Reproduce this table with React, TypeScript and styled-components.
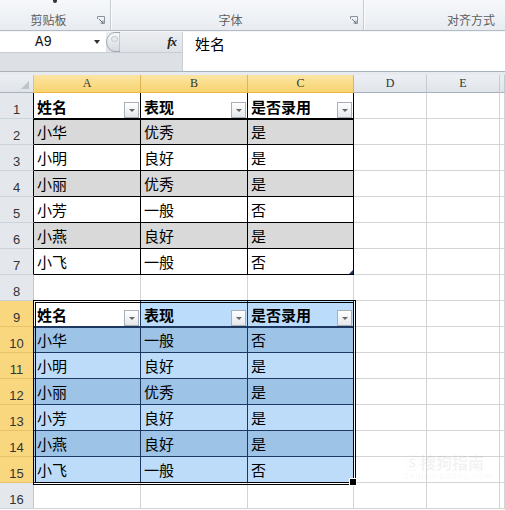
import React from 'react';
import styled, { createGlobalStyle } from 'styled-components';

const Global = createGlobalStyle`
  * { box-sizing: border-box; }
  html, body { margin: 0; padding: 0; background: #fff; overflow: hidden; }
  body { font-family: "Noto Sans CJK SC", sans-serif; }
`;

const NAVY = '#1c3760';
const GRID = '#d4d4d4';

const Page = styled.div`
  position: relative;
  width: 505px;
  height: 510px;
  display: flex;
  flex-direction: column;
  overflow: hidden;
  background: #fff;
`;

const Ribbon = styled.div`
  height: 31px;
  flex: none;
  display: flex;
  background: linear-gradient(#f6f8fa, #e8ecf1);
  border-bottom: 1px solid #b3bcc6;
`;

const Group = styled.div<{ $w: number }>`
  position: relative;
  width: ${p => p.$w}px;
  flex: none;
  display: flex;
  align-items: flex-end;
  padding-bottom: 3px;
  border-right: 1px solid #c5ccd4;
  box-shadow: 1px 0 0 #fafbfc;
`;

const GroupLabel = styled.div`
  flex: 1;
  text-align: center;
  font: 12px/14px "Noto Sans CJK SC", sans-serif;
  color: #5e5e5e;
`;

const Stub = styled.span`
  position: absolute;
  left: 53px;
  top: 0;
  width: 4px;
  height: 3px;
  border-radius: 0 0 2px 2px;
  background: #333;
`;

const Launcher = styled.svg`
  flex: none;
  width: 8px;
  height: 8px;
  margin: 0 5px 3px 0;
`;

const FormulaBar = styled.div`
  height: 41px;
  flex: none;
  display: flex;
  border-top: 1px solid #f3f5f7;
  border-bottom: 1px solid #aab2bc;
`;

const NamePanel = styled.div`
  width: 183px;
  flex: none;
  display: flex;
  flex-direction: column;
  background: #dde1e6;
  border-right: 1px solid #c9cfd6;
`;

const NameRow = styled.div`
  height: 21px;
  display: flex;
  align-items: center;
  background: linear-gradient(#eceef1, #dfe2e6);
  border-bottom: 1px solid #c6ccd3;
`;

const NameBox = styled.div`
  width: 106px;
  height: 20px;
  flex: none;
  display: flex;
  align-items: center;
  padding-left: 35px;
  background: #fff;
  font: 14px/20px "Liberation Mono", monospace;
  color: #111;
`;

const Caret = styled.span`
  margin-left: auto;
  margin-right: 6px;
  border-left: 3px solid transparent;
  border-right: 3px solid transparent;
  border-top: 4px solid #333;
`;

const Grip = styled.svg`
  flex: none;
  width: 14px;
  height: 20px;
`;

const Fx = styled.span`
  margin-left: auto;
  margin-right: 6px;
  font: italic 700 13px/20px "Liberation Serif", serif;
  color: #222;
  letter-spacing: -1px;
`;

const FormulaInput = styled.div`
  flex: 1;
  background: #fff;
  padding-left: 12px;
  font: 15px/24px "Noto Sans CJK SC", sans-serif;
  color: #000;
`;

const Gap = styled.div`
  height: 3px;
  flex: none;
  background: #e7eaee;
`;

const Sheet = styled.div`
  position: relative;
  display: grid;
  grid-template-columns: 34px 107px 107px 106px 73px 73px 1fr;
  grid-template-rows: 18px repeat(16, 26px);
`;

type Pos = { $r: number; $c: number };

const Corner = styled.div`
  grid-area: 1 / 1;
  position: relative;
  background: linear-gradient(#eceff3, #dfe3e8);
  border-right: 1px solid #bcc4cd;
  border-bottom: 1px solid #aab3bd;
  &::after {
    content: '';
    position: absolute;
    right: 4px;
    bottom: 3px;
    width: 8px;
    height: 8px;
    background: #bcc4cc;
    clip-path: polygon(100% 0, 100% 100%, 0 100%);
  }
`;

const ColHead = styled.div<{ $active?: boolean; $c: number }>`
  grid-area: 1 / ${p => p.$c};
  display: flex;
  align-items: center;
  justify-content: center;
  font: 12px/17px "Liberation Serif", serif;
  color: #333;
  background: ${p => (p.$active ? 'linear-gradient(#fbe5a4, #f8d470)' : 'linear-gradient(#eceff3, #e0e4e9)')};
  border-right: 1px solid ${p => (p.$active ? '#dcb45a' : '#c3cad3')};
  border-bottom: 1px solid ${p => (p.$active ? '#f0b840' : '#aab3bd')};
`;

const RowHead = styled.div<{ $active?: boolean; $edge?: string; $r: number }>`
  grid-area: ${p => p.$r} / 1;
  display: flex;
  justify-content: center;
  align-items: flex-start;
  padding-top: 7px;
  font: 13px/20px "Liberation Sans", sans-serif;
  color: #333;
  background: ${p => (p.$active ? '#f9d77e' : '#e4e8ed')};
  border-right: 1px solid ${p => p.$edge ?? (p.$active ? '#e0b55a' : '#bfc7d0')};
  border-bottom: 1px solid ${p => (p.$active ? '#e8c168' : '#cbd2da')};
`;

const Cell = styled.div<Pos & { $fill: string; $line: string; $head?: boolean; $top?: string; $corner?: boolean }>`
  grid-area: ${p => p.$r} / ${p => p.$c};
  position: relative;
  display: flex;
  align-items: center;
  padding: ${p => (p.$head ? '3px 0 0 3px' : '0 0 0 3px')};
  background: ${p => p.$fill};
  border-right: 1px solid ${p => p.$line};
  border-bottom: 1px solid ${p => p.$line};
  box-shadow: ${p => (p.$top ? `inset 0 1px 0 ${p.$top}` : 'none')};
  font: ${p => (p.$head ? 700 : 400)} 15px/22px "Noto Sans CJK SC", sans-serif;
  color: #000;
  white-space: nowrap;
  overflow: hidden;
  &::after {
    content: '';
    display: ${p => (p.$corner ? 'block' : 'none')};
    position: absolute;
    right: 0;
    bottom: 0;
    width: 4px;
    height: 4px;
    background: ${NAVY};
    clip-path: polygon(100% 0, 100% 100%, 0 100%);
  }
`;

const FilterBtn = styled.span`
  margin-left: auto;
  margin-right: 1px;
  align-self: flex-end;
  width: 15px;
  height: 16px;
  flex: none;
  display: flex;
  align-items: center;
  justify-content: center;
  border: 1px solid #a9afb7;
  background: linear-gradient(#ffffff, #e4e7eb);
  &::before {
    content: '';
    border-left: 3px solid transparent;
    border-right: 3px solid transparent;
    border-top: 3px solid #666;
  }
`;

const Selection = styled.div`
  grid-row: 10 / 17;
  grid-column: 2 / 5;
  margin: -1px -2px -2px -1px;
  position: relative;
  z-index: 2;
  border: 3px double #000;
  pointer-events: none;
  &::after {
    content: '';
    position: absolute;
    right: -4px;
    bottom: -4px;
    width: 6px;
    height: 6px;
    background: #000;
    border: 1px solid #fff;
  }
`;

const Watermark = styled.div`
  position: absolute;
  left: 404px;
  top: 452px;
  display: flex;
  flex-direction: column;
  align-items: flex-start;
  color: rgba(120, 120, 120, 0.09);
  pointer-events: none;
  z-index: 3;
`;

const WmTitle = styled.span`
  font: 700 16px/20px "Noto Sans CJK SC", sans-serif;
`;

const WmSub = styled.span`
  font: 7px/10px "Liberation Sans", sans-serif;
  letter-spacing: 1px;
`;

const t1 = [
  ['小华', '优秀', '是'],
  ['小明', '良好', '是'],
  ['小丽', '优秀', '是'],
  ['小芳', '一般', '否'],
  ['小燕', '良好', '是'],
  ['小飞', '一般', '否'],
];

const t2 = [
  ['小华', '一般', '否'],
  ['小明', '良好', '是'],
  ['小丽', '优秀', '是'],
  ['小芳', '良好', '是'],
  ['小燕', '良好', '是'],
  ['小飞', '一般', '否'],
];

const head = ['姓名', '表现', '是否录用'];
const COLS = ['A', 'B', 'C', 'D', 'E', ''];

function renderRow(r: number) {
  const active = r >= 9 && r <= 15;
  const inT1 = r >= 1 && r <= 7;
  const gr = r + 1;
  const cells: React.ReactNode[] = [];
  for (let c = 0; c < 6; c++) {
    const key = `${r}-${c}`;
    const gc = c + 2;
    if (c < 3 && inT1) {
      if (r === 1) {
        cells.push(
          <Cell key={key} $r={gr} $c={gc} $fill="#fff" $line="#000" $head>
            <span>{head[c]}</span>
            <FilterBtn />
          </Cell>
        );
      } else {
        cells.push(
          <Cell
            key={key}
            $r={gr}
            $c={gc}
            $fill={r % 2 === 0 ? '#d9d9d9' : '#fff'}
            $line="#000"
            $top={r === 2 ? '#000' : undefined}
            $corner={r === 7 && c === 2}
          >
            {t1[r - 2][c]}
          </Cell>
        );
      }
    } else if (c < 3 && active) {
      if (r === 9) {
        cells.push(
          <Cell key={key} $r={gr} $c={gc} $fill={c === 0 ? '#fff' : '#bcdcfb'} $line={NAVY} $head>
            <span>{head[c]}</span>
            <FilterBtn />
          </Cell>
        );
      } else {
        cells.push(
          <Cell
            key={key}
            $r={gr}
            $c={gc}
            $fill={r % 2 === 0 ? '#9dc3e6' : '#bcdcfa'}
            $line={NAVY}
            $top={r === 10 ? NAVY : undefined}
          >
            {t2[r - 10][c]}
          </Cell>
        );
      }
    } else {
      cells.push(<Cell key={key} $r={gr} $c={gc} $fill="#fff" $line={GRID} />);
    }
  }
  return (
    <React.Fragment key={r}>
      <RowHead $r={gr} $active={active} $edge={inT1 ? '#000' : undefined}>
        {r}
      </RowHead>
      {cells}
    </React.Fragment>
  );
}

export default function App() {
  const rows = Array.from({ length: 16 }, (_, i) => i + 1);
  return (
    <Page>
      <Global />
      <Ribbon>
        <Group $w={111}>
          <Stub />
          <GroupLabel>剪贴板</GroupLabel>
          <Launcher viewBox="0 0 8 8">
            <path d="M0.5 3V0.5H7.5V7.5H5" fill="none" stroke="#8a939d" strokeWidth="1" />
            <path d="M2 3L6 7M6 4.5V7H3.5" fill="none" stroke="#6f7882" strokeWidth="1" />
          </Launcher>
        </Group>
        <Group $w={253}>
          <GroupLabel>字体</GroupLabel>
          <Launcher viewBox="0 0 8 8">
            <path d="M0.5 3V0.5H7.5V7.5H5" fill="none" stroke="#8a939d" strokeWidth="1" />
            <path d="M2 3L6 7M6 4.5V7H3.5" fill="none" stroke="#6f7882" strokeWidth="1" />
          </Launcher>
        </Group>
        <Group $w={215}>
          <GroupLabel>对齐方式</GroupLabel>
        </Group>
      </Ribbon>
      <FormulaBar>
        <NamePanel>
          <NameRow>
            <NameBox>
              A9
              <Caret />
            </NameBox>
            <Grip viewBox="0 0 14 20">
              <defs>
                <linearGradient id="gg" x1="0" y1="0" x2="0" y2="1">
                  <stop offset="0" stopColor="#f7f8fa" />
                  <stop offset="1" stopColor="#d5dae0" />
                </linearGradient>
              </defs>
              <path d="M14 0.5H9A8.5 9.5 0 0 0 9 19.5H14Z" fill="url(#gg)" stroke="#9ea7b1" strokeWidth="1" />
              <ellipse cx="8.5" cy="7" rx="3" ry="2.5" fill="#e9ecef" stroke="#c0c7cf" strokeWidth="1" />
            </Grip>
            <Fx>fx</Fx>
          </NameRow>
        </NamePanel>
        <FormulaInput>姓名</FormulaInput>
      </FormulaBar>
      <Gap />
      <Sheet>
        <Corner />
        {COLS.map((c, i) => (
          <ColHead key={i} $c={i + 2} $active={i < 3}>
            {c}
          </ColHead>
        ))}
        {rows.map(r => renderRow(r))}
        <Selection />
      </Sheet>
      <Watermark>
        <WmTitle>Ⓢ搜狗指南</WmTitle>
        <WmSub>ZHINAN.SOGOU.COM</WmSub>
      </Watermark>
    </Page>
  );
}
